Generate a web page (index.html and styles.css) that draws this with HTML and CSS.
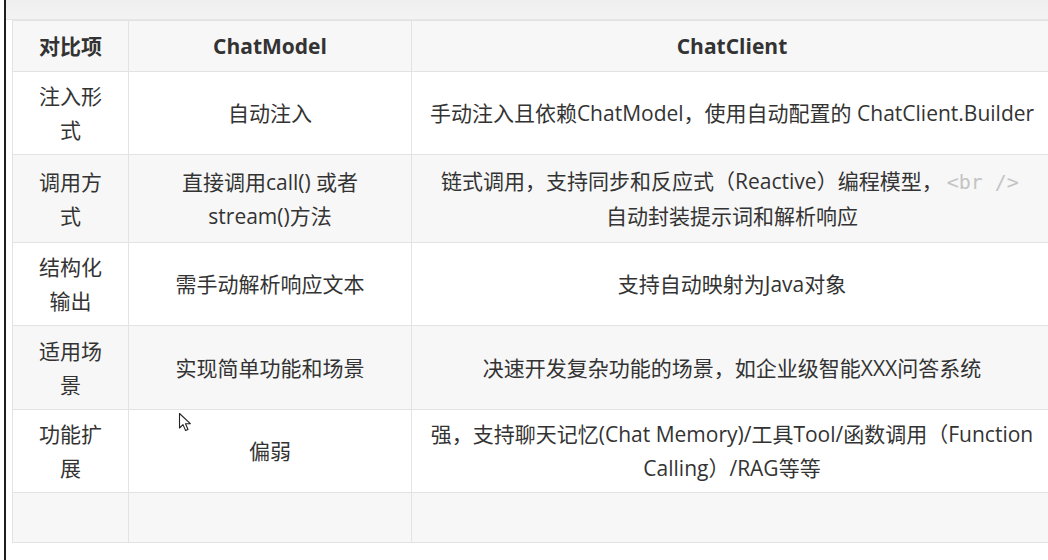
FILE: index.html
```html
<!DOCTYPE html>
<html lang="zh">
<head>
<meta charset="utf-8">
<link rel="stylesheet" href="styles.css">
</head>
<body>
<div class="page">
  <div class="rule"></div>
  <div class="content">
    <div class="topbar"></div>
    <table class="cmp">
      <colgroup>
        <col class="c1"><col class="c2"><col class="c3">
      </colgroup>
      <thead>
        <tr class="odd">
          <th>对比项</th>
          <th>ChatModel</th>
          <th class="wide">ChatClient</th>
        </tr>
      </thead>
      <tbody>
        <tr class="even r1">
          <td>注入形式</td>
          <td>自动注入</td>
          <td class="wide">手动注入且依赖ChatModel，使用自动配置的 ChatClient.Builder</td>
        </tr>
        <tr class="odd r2">
          <td>调用方式</td>
          <td>直接调用call() 或者 stream()方法</td>
          <td class="wide">链式调用，支持同步和反应式（Reactive）编程模型，<code>&lt;br /&gt;</code> 自动封装提示词和解析响应</td>
        </tr>
        <tr class="even r3">
          <td>结构化输出</td>
          <td>需手动解析响应文本</td>
          <td class="wide">支持自动映射为Java对象</td>
        </tr>
        <tr class="odd r4">
          <td>适用场景</td>
          <td>实现简单功能和场景</td>
          <td class="wide">决速开发复杂功能的场景，如企业级智能XXX问答系统</td>
        </tr>
        <tr class="even r5">
          <td>功能扩展</td>
          <td>偏弱</td>
          <td class="wide">强，支持聊天记忆(Chat Memory)/工具Tool/函数调用（Function Calling）/RAG等等</td>
        </tr>
        <tr class="odd r6">
          <td></td>
          <td></td>
          <td class="wide"></td>
        </tr>
      </tbody>
    </table>
  </div>
  <svg class="cursor" width="14" height="22" viewBox="0 0 14 22">
    <path d="M1.5 1.5 L1.5 16 L5 12.6 L7.6 18.6 L10 17.5 L7.5 11.7 L12.3 11.7 Z" fill="#fff" stroke="#222" stroke-width="1.1" stroke-linejoin="round"/>
  </svg>
</div>
</body>
</html>
```

FILE: styles.css
```css
html, body {
  margin: 0;
  padding: 0;
  background: #ffffff;
  overflow: hidden;
}

.page {
  position: relative;
  width: 1048px;
  height: 560px;
  display: flex;
  overflow: hidden;
}

.rule {
  width: 2px;
  margin-left: 4px;
  background: #1e1e1e;
  flex: none;
}

.content {
  flex: 1;
  padding-left: 6px;
  background: linear-gradient(to bottom, #f0f0f0 0, #f4f4f4 19px, #ffffff 20px);
}

.topbar {
  height: 20px;
  margin-left: -6px;
  background: linear-gradient(to bottom, #efefef, #f3f3f3);
  border-bottom: 1px solid #e6e6e6;
  box-sizing: border-box;
}

.cmp {
  border-collapse: collapse;
  table-layout: fixed;
  width: 1040px;
  font-family: "Open Sans", "Noto Sans CJK SC", sans-serif;
  font-size: 21px;
  line-height: 34px;
  color: #333333;
}

.c1 { width: 116px; }
.c2 { width: 283px; }
.c3 { width: 641px; }

.cmp th,
.cmp td {
  border: 1px solid #e3e3e3;
  padding: 6px 20px;
  text-align: center;
  vertical-align: middle;
}

.cmp th {
  font-weight: bold;
  height: 38px;
}

.cmp .wide {
  padding-left: 16px;
  padding-right: 16px;
}

.odd { background: #f7f7f7; }
.even { background: #ffffff; }

.r1 td { height: 70px; }
.r2 td { height: 75px; }
.r3 td { height: 70px; }
.r4 td { height: 71px; }
.r5 td { height: 70px; }
.r6 td { height: 37px; }

.cmp code {
  font-family: "DejaVu Sans Mono", "Liberation Mono", monospace;
  font-size: 20px;
  padding: 0 4px;
  color: #c4c4c4;
}

.cursor {
  position: absolute;
  left: 178px;
  top: 412px;
}
```
